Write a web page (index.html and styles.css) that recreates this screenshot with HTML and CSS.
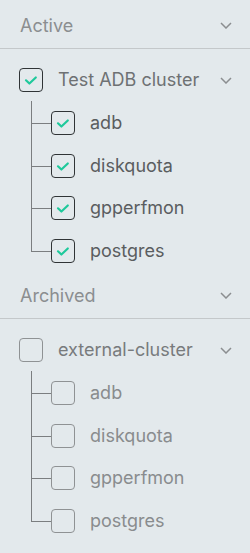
FILE: index.html
```html
<!DOCTYPE html>
<html>
<head>
<meta charset="utf-8">
<link rel="stylesheet" href="styles.css">
</head>
<body>
  <section class="section">
    <div class="section-header">
      <span>Active</span>
      <svg class="chev" width="12" height="7" viewBox="0 0 12 7"><path d="M1 1l5 5 5-5" fill="none" stroke="currentColor" stroke-width="1.5"/></svg>
    </div>
    <div class="tree">
      <div class="row cluster">
        <span class="cb on"><svg width="24" height="24" viewBox="0 0 24 24"><path d="M7 12.3l3.4 3.2 6.4-6" fill="none" stroke="#1ec99b" stroke-width="2.2" stroke-linecap="round" stroke-linejoin="round"/></svg></span>
        <span class="label">Test ADB cluster</span>
        <svg class="chev" width="12" height="7" viewBox="0 0 12 7"><path d="M1 1l5 5 5-5" fill="none" stroke="currentColor" stroke-width="1.5"/></svg>
      </div>
      <div class="children">
        <div class="row child"><span class="cb on"><svg width="24" height="24" viewBox="0 0 24 24"><path d="M7 12.3l3.4 3.2 6.4-6" fill="none" stroke="#1ec99b" stroke-width="2.2" stroke-linecap="round" stroke-linejoin="round"/></svg></span><span class="label">adb</span></div>
        <div class="row child"><span class="cb on"><svg width="24" height="24" viewBox="0 0 24 24"><path d="M7 12.3l3.4 3.2 6.4-6" fill="none" stroke="#1ec99b" stroke-width="2.2" stroke-linecap="round" stroke-linejoin="round"/></svg></span><span class="label">diskquota</span></div>
        <div class="row child"><span class="cb on"><svg width="24" height="24" viewBox="0 0 24 24"><path d="M7 12.3l3.4 3.2 6.4-6" fill="none" stroke="#1ec99b" stroke-width="2.2" stroke-linecap="round" stroke-linejoin="round"/></svg></span><span class="label">gpperfmon</span></div>
        <div class="row child"><span class="cb on"><svg width="24" height="24" viewBox="0 0 24 24"><path d="M7 12.3l3.4 3.2 6.4-6" fill="none" stroke="#1ec99b" stroke-width="2.2" stroke-linecap="round" stroke-linejoin="round"/></svg></span><span class="label">postgres</span></div>
      </div>
    </div>
  </section>
  <section class="section archived">
    <div class="section-header">
      <span>Archived</span>
      <svg class="chev" width="12" height="7" viewBox="0 0 12 7"><path d="M1 1l5 5 5-5" fill="none" stroke="currentColor" stroke-width="1.5"/></svg>
    </div>
    <div class="tree">
      <div class="row cluster">
        <span class="cb"></span>
        <span class="label">external-cluster</span>
        <svg class="chev" width="12" height="7" viewBox="0 0 12 7"><path d="M1 1l5 5 5-5" fill="none" stroke="currentColor" stroke-width="1.5"/></svg>
      </div>
      <div class="children">
        <div class="row child"><span class="cb"></span><span class="label">adb</span></div>
        <div class="row child"><span class="cb"></span><span class="label">diskquota</span></div>
        <div class="row child"><span class="cb"></span><span class="label">gpperfmon</span></div>
        <div class="row child"><span class="cb"></span><span class="label">postgres</span></div>
      </div>
    </div>
  </section>
</body>
</html>
```
FILE: styles.css
```css
html, body {
  margin: 0;
  padding: 0;
}
body {
  background: #e3e9ec;
  font-family: Inter, "Noto Sans", sans-serif;
  font-size: 18px;
  width: 250px;
  height: 553px;
  overflow: hidden;
}
.section-header {
  display: flex;
  justify-content: space-between;
  align-items: center;
  height: 19px;
  line-height: 19px;
  padding: 16px 18px 13px 20px;
  border-bottom: 1px solid #c4c8ca;
  color: #8b8e90;
}
.chev {
  color: #8b8e90;
  flex: none;
}
.tree {
  padding: 19px 18px 7px 19px;
}
.row {
  display: flex;
  align-items: center;
  height: 24px;
  line-height: 24px;
}
.cb {
  flex: none;
  width: 24px;
  height: 24px;
  box-sizing: border-box;
  border: 1px solid #303436;
  border-radius: 4px;
  margin-right: 15px;
  position: relative;
}
.cb svg {
  position: absolute;
  left: -1px;
  top: -1px;
}
.label {
  flex: 1;
  white-space: nowrap;
}
.cluster .label {
  color: #6e7173;
}
.children {
  padding-left: 32px;
}
.child {
  margin-top: 18.75px;
  position: relative;
  color: #5a5d5f;
}
.child::before {
  content: "";
  position: absolute;
  left: -20px;
  top: -9.5px;
  bottom: -9.5px;
  border-left: 1px solid #7b7e80;
}
.child:last-child::before {
  bottom: 50%;
}
.child::after {
  content: "";
  position: absolute;
  left: -20px;
  width: 20px;
  top: 50%;
  border-top: 1px solid #7b7e80;
}
.archived .cb {
  border-color: #8f9294;
}
.archived .cluster .label {
  color: #787b7d;
}
.archived .child {
  color: #898c8e;
}
```
